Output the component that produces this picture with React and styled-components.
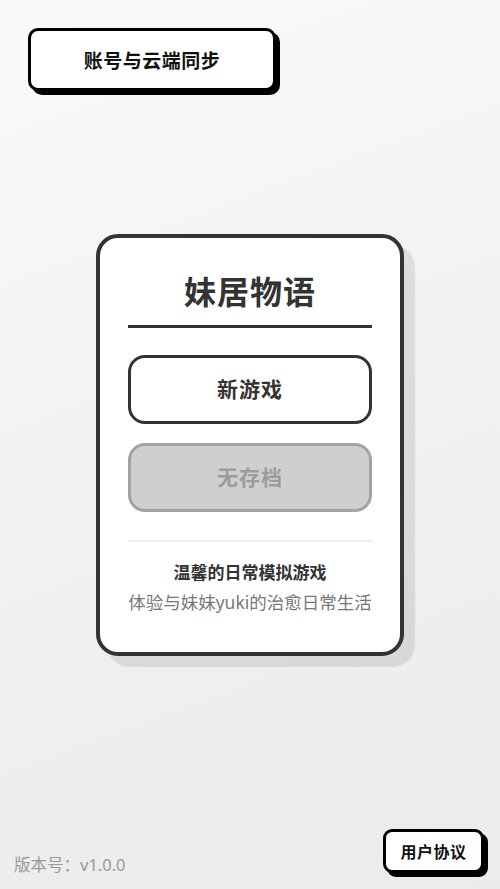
import React from "react";
import styled, { createGlobalStyle } from "styled-components";

const Global = createGlobalStyle`
  * { box-sizing: border-box; }
  html, body { margin: 0; padding: 0; }
  body {
    font-family: "Noto Sans", "Noto Sans CJK SC", sans-serif;
    background: #f2f2f2;
  }
`;

const Page = styled.div`
  width: 500px;
  height: 889px;
  display: grid;
  grid-template-rows: 1fr auto 1fr;
  background: linear-gradient(160deg, #fafafa 0%, #f1f1f1 50%, #ebebeb 100%);
  overflow: hidden;
`;

const TopBar = styled.div`
  display: flex;
  align-items: flex-start;
  padding: 28px 0 0 28px;
`;

const PopButton = styled.button`
  font-family: "Noto Sans CJK SC", sans-serif;
  font-weight: 700;
  color: #111;
  background: #fff;
  border: 3px solid #000;
  box-shadow: 4px 4px 0 #000;
  cursor: pointer;
  padding: 0;
`;

const SyncButton = styled(PopButton)`
  width: 248px;
  height: 63px;
  border-radius: 10px;
  font-size: 19px;
  letter-spacing: 0.5px;
`;

const Center = styled.div`
  display: flex;
  justify-content: center;
`;

const Card = styled.div`
  width: 308px;
  background: #fff;
  border: 4px solid #333;
  border-radius: 22px;
  box-shadow: 11px 11px 1px rgba(0, 0, 0, 0.09);
  padding: 30px 28px 36px;
  display: flex;
  flex-direction: column;
  align-items: stretch;
`;

const Title = styled.h1`
  margin: 0;
  font-family: "Noto Sans CJK SC", sans-serif;
  font-size: 32px;
  line-height: 44px;
  font-weight: 700;
  color: #333;
  text-align: center;
  padding-bottom: 13px;
  border-bottom: 3px solid #333;
  letter-spacing: 1px;
`;

const Actions = styled.div`
  display: flex;
  flex-direction: column;
  gap: 19px;
  margin-top: 27px;
`;

const MenuButton = styled.button`
  height: 69px;
  border-radius: 17px;
  border: 3px solid ${(p) => (p.$disabled ? "#a3a3a3" : "#333")};
  background: ${(p) => (p.$disabled ? "#cfcfcf" : "#fff")};
  color: ${(p) => (p.$disabled ? "#9c9c9c" : "#333")};
  font-family: "Noto Sans CJK SC", sans-serif;
  font-size: 21px;
  font-weight: 700;
  letter-spacing: 1px;
  padding: 0 0 3px;
  cursor: ${(p) => (p.$disabled ? "default" : "pointer")};
`;

const Divider = styled.div`
  height: 2px;
  background: #eee;
  margin-top: 28px;
`;

const Tagline = styled.div`
  margin-top: 16px;
  font-family: "Noto Sans CJK SC", sans-serif;
  font-size: 17px;
  line-height: 28px;
  font-weight: 700;
  color: #333;
  text-align: center;
`;

const Sub = styled.div`
  margin-top: 2px;
  font-family: "Noto Sans", "Noto Sans CJK SC", sans-serif;
  font-size: 17.5px;
  line-height: 28px;
  color: #777;
  text-align: center;
  white-space: nowrap;
`;

const Footer = styled.div`
  display: flex;
  justify-content: space-between;
  align-items: flex-end;
  padding: 0 16px 16px 14px;
`;

const Version = styled.span`
  font-family: "Noto Sans", "Noto Sans CJK SC", sans-serif;
  font-size: 16.5px;
  line-height: 16px;
  color: #999;
`;

const AgreementButton = styled(PopButton)`
  width: 101px;
  height: 44px;
  border-radius: 9px;
  font-size: 16px;
  letter-spacing: 0.5px;
`;

export default function App() {
  return (
    <>
      <Global />
      <Page>
        <TopBar>
          <SyncButton>账号与云端同步</SyncButton>
        </TopBar>
        <Center>
          <Card>
            <Title>妹居物语</Title>
            <Actions>
              <MenuButton>新游戏</MenuButton>
              <MenuButton $disabled>无存档</MenuButton>
            </Actions>
            <Divider />
            <Tagline>温馨的日常模拟游戏</Tagline>
            <Sub>体验与妹妹yuki的治愈日常生活</Sub>
          </Card>
        </Center>
        <Footer>
          <Version>版本号：v1.0.0</Version>
          <AgreementButton>用户协议</AgreementButton>
        </Footer>
      </Page>
    </>
  );
}
